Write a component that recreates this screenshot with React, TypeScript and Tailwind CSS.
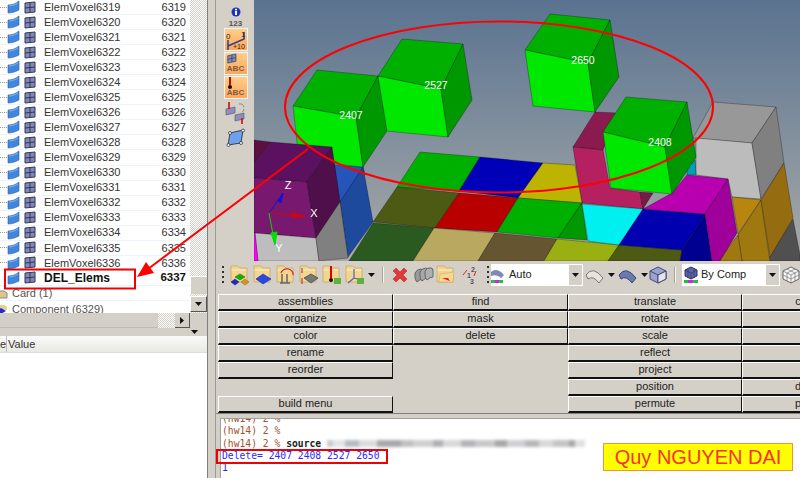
const treeIds = Array.from({ length: 18 }, (_, i) => 6319 + i);

const buttonRows = [
  ['assemblies', 'find', 'translate', 'c'],
  ['organize', 'mask', 'rotate', ''],
  ['color', 'delete', 'scale', ''],
  ['rename', null, 'reflect', ''],
  ['reorder', null, 'project', ''],
  [null, null, 'position', 'd'],
  ['build menu', null, 'permute', 'p'],
];

const blurBits = [
  [6, '#c8ccd0'], [12, '#e4e4e4'], [14, '#b8bcc0'], [18, '#dcdcdc'], [24, '#a8a8ac'], [12, '#c0c0c0'], [20, '#d0d0d0'],
  [10, '#b0b0b4'], [18, '#d8d8d8'], [14, '#b4b4b8'], [20, '#c8c8c8'], [12, '#a8a8a8'], [18, '#d0d0d4'], [14, '#b8b8b8'],
  [14, '#d8d8d8'], [16, '#c4c4c4'], [6, '#a8a8a8'], [10, '#e0e0e0'],
];

// top to bottom in paint order, coordinates are page pixels
const faces: [string, string][] = [
  // grey box, back right
  ['#989898', '693,138 713,102 776,107 752,143'],
  ['#bcbcbc', '696,138 752,143 761,199 732,197 728,179 696,175'],
  ['#808080', '752,143 776,107 784,163 761,199'],
  // orange boxes
  ['#505050', '767,261 793,219 800,255 800,261'],
  ['#b8860f', '732,197 761,200 738,234'],
  ['#a07810', '738,235 761,200 770,261 742,261'],
  ['#966c10', '761,200 784,163 793,218 770,257'],
  ['#a07810', '718,261 738,235 742,261'],
  // pink box
  ['#8a1a50', '573,147 595,112 617,113 603,150'],
  ['#b42060', '573,147 603,150 610,188 640,192 643,209 582,203'],
  ['#7a1848', '640,192 653,193 643,209'],
  ['#00a0b0', '687,168 695,160 696,175 687,175'],
  // floor
  ['#00b000', '420,152 480,157 459,191 397,187'],
  ['#0000b8', '480,157 543,163 518,198 459,191'],
  ['#bcb400', '543,163 575,165 582,203 518,198'],
  ['#4d5a13', '397,187 459,193 435,228 373,222'],
  ['#b80000', '459,193 518,198 497,232 435,228'],
  ['#00b000', '518,198 582,203 558,238 497,232'],
  ['#009800', '582,203 558,238 587,240'],
  ['#2a5a20', '373,223 434,228 413,261 349,261'],
  ['#b8a860', '434,228 495,233 478,261 413,261'],
  ['#655530', '495,233 557,239 544,261 478,261'],
  ['#9ab010', '557,239 619,245 608,261 544,261'],
  ['#4d5a13', '619,245 682,250 680,261 608,261'],
  ['#00f0f0', '582,204 643,209 619,245 588,241'],
  ['#0000b0', '643,209 705,214 682,250 619,245'],
  ['#000090', '705,214 712,261 680,261 682,250'],
  ['#b800b0', '643,209 672,193 687,175 728,179 705,214'],
  ['#a0009a', '705,214 728,179 737,233 720,261 712,261'],
  // blue column
  ['#2555b8', '334,165 363,167 365,174 340,202'],
  ['#1e4a9e', '363,167 373,222 348,257 340,202'],
  // green cubes
  ['#00b000', '293,106 317,70 378,76 356,117'],
  ['#00e800', '293,106 356,117 363,167 299,160'],
  ['#009800', '356,117 378,76 387,131 363,167'],
  ['#00b000', '378,76 402,39 463,44 441,89'],
  ['#00e800', '378,76 441,89 448,137 387,131'],
  ['#009800', '441,89 463,44 472,100 448,137'],
  ['#00b000', '525,50 550,14 610,20 588,63'],
  ['#00e800', '525,50 588,63 595,112 533,106'],
  ['#009800', '588,63 610,20 619,77 595,112'],
  ['#00b000', '603,132 626,97 687,102 665,147'],
  ['#00e800', '603,132 665,147 672,194 611,188'],
  ['#009800', '665,147 687,102 696,157 672,194'],
  // purple box
  ['#5c1040', '254,140 270,142 254,163'],
  ['#5c1060', '270,142 332,147 307,182 254,178 254,163'],
  ['#78186f', '254,178 307,182 316,238 254,233'],
  ['#4e0f4a', '307,182 332,147 340,202 316,238'],
  ['#bdbdbd', '255,233 316,238 319,261 258,261'],
  ['#808080', '316,238 340,202 348,258 319,261'],
  ['#ff00ff', '254,233 255,233 258,261 254,261'],
];

const Grip = () => (
  <div className="flex flex-col gap-[3px] w-[2px] shrink-0">
    {[0, 1, 2, 3].map((i) => (
      <div key={i} className="w-[2px] h-[2px] bg-[#303030]" />
    ))}
  </div>
);

const DownCaret = () => (
  <svg width="7" height="4" viewBox="0 0 7 4" className="shrink-0">
    <path d="M0 0h7L3.500 4z" fill="#111" />
  </svg>
);

const ShellFlag = () => (
  <svg width="13" height="14" viewBox="0 0 13 14" className="shrink-0">
    <path d="M1 5C5 5 8 4 12 1V10C8 12 5 13 1 13Z" fill="#3f86dc" stroke="#2a62b0" strokeWidth="0.6" />
    <path d="M2 6C5 6 8 5 11 3" stroke="#7fb4ee" fill="none" />
  </svg>
);

const ElemGrid = () => (
  <svg width="12" height="13" viewBox="0 0 12 13" className="shrink-0">
    <path d="M1 2L11 1V11L1 12Z" fill="#8088bc" stroke="#33364f" />
    <path d="M6 1.500V11.500M1 7L11 6" stroke="#33364f" />
  </svg>
);

const Folder = ({ children }: { children?: React.ReactNode }) => (
  <svg width="20" height="22" viewBox="0 0 20 22" className="shrink-0">
    <path d="M1 2h7l2 2h7v14H1z" fill="#f2d590" stroke="#c9a867" strokeWidth="0.8" />
    <path d="M1.500 6h15" stroke="#fbeec4" />
    {children}
  </svg>
);

const TreeRow = ({ label, id }: { label: string; id: number }) => (
  <div className="flex items-center h-[15.06px] border-b border-[#eef4fa] text-[11px] text-[#333] shrink-0">
    <div className="w-[7px] border-t border-dotted border-[#999] shrink-0" />
    <ShellFlag />
    <div className="w-[4px]" />
    <ElemGrid />
    <span className="ml-[8px]">{label}</span>
    <span className="ml-auto mr-[4px]">{id}</span>
  </div>
);

const OrangeBtn = ({ children }: { children: React.ReactNode }) => (
  <div className="w-[24px] h-[23px] border border-[#f4f4f4] bg-gradient-to-b from-[#ffcf8a] to-[#ffa558] flex flex-col items-center justify-end overflow-hidden">
    {children}
  </div>
);

const SideToolbar = () => (
  <div className="w-[38px] shrink-0 flex flex-col items-center pl-[1px] pt-[5px]">
    <svg width="14" height="14" viewBox="0 0 14 14">
      <circle cx="7" cy="7" r="4.500" fill="#1a34c0" />
      <rect x="6" y="3.800" width="2" height="1.500" fill="#fff" />
      <rect x="6" y="6" width="2" height="4" fill="#fff" />
    </svg>
    <span className="text-[8px] font-bold text-[#555] leading-[9px]">123</span>
    <div className="flex flex-col gap-[1px]">
      <OrangeBtn>
        <svg width="22" height="21" viewBox="0 0 22 21">
          <path d="M3 17L19 10V3" stroke="#2a3f8a" strokeWidth="1.500" fill="none" />
          <path d="M3 11V21" stroke="#2a3f8a" strokeWidth="1.500" />
          <text x="1" y="10" fontSize="8" fill="#222" fontFamily="Liberation Sans">0</text>
          <text x="16" y="8" fontSize="8" fill="#222" fontFamily="Liberation Sans">1</text>
          <text x="8" y="20" fontSize="7" fill="#222" fontFamily="Liberation Sans">+10</text>
        </svg>
      </OrangeBtn>
      <OrangeBtn>
        <svg width="22" height="12" viewBox="0 0 22 12" className="mb-[1px]">
          <path d="M2 3L11 1V9L2 11Z" fill="#8088bc" stroke="#33364f" strokeWidth="0.7" />
          <path d="M6.500 2V10M2 7L11 5" stroke="#33364f" strokeWidth="0.7" />
        </svg>
        <span className="text-[8px] font-bold text-[#7a5a44] leading-[8px] mb-[1px]">ABC</span>
      </OrangeBtn>
      <OrangeBtn>
        <svg width="22" height="13" viewBox="0 0 22 13" className="-mb-[1px]">
          <path d="M5 0V8" stroke="#e00000" strokeWidth="2" />
          <circle cx="5" cy="10" r="2" fill="#111" />
        </svg>
        <span className="text-[8px] font-bold text-[#7a5a44] leading-[8px] mb-[1px]">ABC</span>
      </OrangeBtn>
    </div>
    <svg width="24" height="22" viewBox="0 0 24 22" className="mt-[3px]">
      <path d="M2 7L11 5V11L2 13Z" fill="#8a90c0" stroke="#555" strokeWidth="0.6" />
      <path d="M11 13L20 11V17L11 19Z" fill="#8a90c0" stroke="#555" strokeWidth="0.6" />
      <path d="M5 0V7M18 16V22" stroke="#e00000" strokeWidth="1.600" />
      <path d="M15 2a4 4 0 0 1 5 3M18 10a3 3 0 0 0 2-3" stroke="#888" fill="none" />
    </svg>
    <svg width="20" height="20" viewBox="0 0 20 20" className="mt-[4px] ml-[1px]">
      <path d="M4 5L17 2L15 15L2 17Z" fill="#6ea0ee" stroke="#222" strokeWidth="0.8" />
      <g fill="#fff" stroke="#222" strokeWidth="0.7">
        <circle cx="4" cy="5" r="1.500" />
        <circle cx="17" cy="2.500" r="1.500" />
        <circle cx="15" cy="15" r="1.500" />
        <circle cx="2.500" cy="17" r="1.500" />
      </g>
    </svg>
  </div>
);

const Viewport = () => (
  <div className="w-[546px] h-[261px] shrink-0 bg-gradient-to-b from-[#5a7390] to-[#a8aaa8]">
    <svg width="546" height="261" viewBox="254 0 546 261" className="block">
      {faces.map(([fill, points], i) => (
        <polygon key={i} points={points} fill={fill} stroke="#00000066" strokeWidth="0.7" />
      ))}
      <g fill="#fff" fontSize="10.500" fontFamily="Liberation Sans" textAnchor="middle">
        <text x="351" y="119">2407</text>
        <text x="436" y="89">2527</text>
        <text x="583" y="64">2650</text>
        <text x="660" y="146">2408</text>
      </g>
      <path d="M269 213L283 193" stroke="#1010e0" />
      <path d="M278 201L283 193L281 203Z" fill="#1010e0" stroke="#1010e0" />
      <path d="M269 213L305 216" stroke="#e00000" />
      <path d="M292 213L305 216L292 217Z" fill="#e00000" stroke="#e00000" />
      <path d="M269 213L275 245" stroke="#00e000" />
      <path d="M271 233L275 245L277 232Z" fill="#00e000" stroke="#00e000" />
      <g fill="#fff" fontSize="11" fontFamily="Liberation Sans" textAnchor="middle">
        <text x="288" y="189">Z</text>
        <text x="314" y="217">X</text>
        <text x="279" y="252">Y</text>
      </g>
    </svg>
  </div>
);

const ComboBox = ({ icon, label, width }: { icon: React.ReactNode; label: string; width: string }) => (
  <div className={`${width} h-[22px] bg-white flex items-center shrink-0`}>
    {icon}
    <span className="text-[11px] text-[#222] ml-[2px]">{label}</span>
    <div className="ml-auto w-[13px] h-[20px] mr-[1px] bg-[#d4d0c8] flex items-center justify-center">
      <DownCaret />
    </div>
  </div>
);

const MainToolbar = () => (
  <div className="h-[33px] flex items-center shrink-0 pl-[6px] pb-[6px] overflow-hidden">
    <Grip />
    <div className="flex items-center gap-[3px] ml-[6px]">
      <Folder>
        <path d="M5 13l5-3 5 3-5 3z" fill="#10b010" stroke="#087008" strokeWidth="0.5" />
        <path d="M1 18l4-3 4 3-4 3z" fill="#1a2ad0" stroke="#101880" strokeWidth="0.5" />
        <path d="M11 18l4-3 4 3-4 3z" fill="#e09020" stroke="#906010" strokeWidth="0.5" />
      </Folder>
      <Folder>
        <path d="M3 15l7-5 8 5-8 5z" fill="#2848e0" stroke="#1428a0" strokeWidth="0.6" />
      </Folder>
      <Folder>
        <path d="M6 19V10M11 19V10M4 19h10" stroke="#666" strokeWidth="1.500" />
        <path d="M5 9a6 5 0 0 1 12 2" stroke="#e02020" fill="none" strokeWidth="1.200" />
      </Folder>
      <Folder>
        <path d="M5 14l7-4 7 4-7 5z" fill="#777" stroke="#333" strokeWidth="0.6" />
        <path d="M3 4V9M3 14V20" stroke="#b02020" />
      </Folder>
      <Folder>
        <path d="M9 2V14" stroke="#e00000" strokeWidth="2" />
        <circle cx="9" cy="16" r="2" fill="#111" />
        <rect x="12" y="14" width="7" height="6" fill="#60b040" />
      </Folder>
      <Folder>
        <path d="M9 5V14L3 19M9 14L17 16" stroke="#5060c0" strokeWidth="1.200" fill="none" />
        <rect x="12" y="14" width="7" height="6" fill="#60b040" />
      </Folder>
    </div>
    <div className="ml-[3px]">
      <DownCaret />
    </div>
    <div className="w-[2px] h-[16px] bg-[#f4f4f4] border-l border-[#a8a49c] ml-[7px]" />
    <svg width="18" height="18" viewBox="0 0 18 18" className="ml-[7px] shrink-0">
      <path d="M2 5L5 2L9 6L13 2L16 5L12 9L16 13L13 16L9 12L5 16L2 13L6 9Z" fill="#e03a3a" stroke="#a02020" strokeWidth="0.5" />
    </svg>
    <svg width="20" height="18" viewBox="0 0 20 18" className="ml-[5px] shrink-0">
      <path d="M1 7Q3 3 7 3Q9 3 9 7V13Q6 13 3 16Q1 14 1 11Z" fill="#9a9a9a" stroke="#666" />
      <path d="M6 6Q8 2 12 2Q14 2 14 6V12Q11 12 8 15Q6 13 6 10Z" fill="#a8a8a8" stroke="#666" />
      <path d="M11 5Q13 1 17 2Q19 2 19 5V11Q16 11 13 14Q11 12 11 9Z" fill="#b0b0b0" stroke="#666" />
    </svg>
    <div className="ml-[2px] flex">
      <Folder>
        <path d="M4 10l14-2-1 10H3z" fill="#f8d890" stroke="#c9a867" strokeWidth="0.6" />
        <path d="M6 14h6l2 3-3-1z" fill="#e82020" />
      </Folder>
    </div>
    <svg width="17" height="20" viewBox="0 0 17 20" className="ml-[6px] shrink-0">
      <text x="9" y="7" fontSize="7" fontWeight="bold" fill="#555" fontFamily="Liberation Sans">2</text>
      <text x="5" y="13" fontSize="7" fontWeight="bold" fill="#555" fontFamily="Liberation Sans">1</text>
      <text x="8" y="19" fontSize="7" fontWeight="bold" fill="#555" fontFamily="Liberation Sans">3</text>
      <path d="M1 10L5 5M14 6L12 11" stroke="#e02020" />
    </svg>
    <div className="ml-[8px]">
      <Grip />
    </div>
    <div className="ml-[2px]">
      <ComboBox
        width="w-[92px]"
        label="Auto"
        icon={
          <svg width="16" height="18" viewBox="0 0 16 18" className="shrink-0">
            <path d="M0 6Q6 1 13 9L10 12Q6 8 0 10Z" fill="#7f88b8" />
            <rect x="0" y="14" width="12" height="3" fill="#20c040" />
            <rect x="4" y="14" width="4" height="3" fill="#e020e0" />
          </svg>
        }
      />
    </div>
    <svg width="19" height="18" viewBox="0 0 19 18" className="ml-[2px] shrink-0">
      <path d="M1 9Q8 -1 18 12L14 17Q8 9 3 13Z" fill="#e8e4dc" stroke="#777" />
    </svg>
    <div className="ml-[4px]">
      <DownCaret />
    </div>
    <svg width="19" height="18" viewBox="0 0 19 18" className="ml-[3px] shrink-0">
      <path d="M1 9Q8 -1 18 12L14 17Q8 9 3 13Z" fill="#6c78b0" stroke="#3c4670" />
    </svg>
    <div className="ml-[4px]">
      <DownCaret />
    </div>
    <svg width="18" height="18" viewBox="0 0 18 18" className="ml-[1px] shrink-0">
      <path d="M9 1L17 5V13L9 17L1 13V5Z" fill="#9aa2d0" stroke="#444a70" />
      <path d="M1 5L9 9L17 5M9 9V17" stroke="#444a70" fill="none" />
      <path d="M9 9L17 5V13L9 17Z" fill="#e4e4ec" stroke="#444a70" />
    </svg>
    <div className="w-[2px] h-[16px] bg-[#f4f4f4] border-l border-[#a8a49c] ml-[7px] shrink-0" />
    <div className="ml-[6px]">
      <ComboBox
        width="w-[98px]"
        label="By Comp"
        icon={
          <svg width="16" height="18" viewBox="0 0 16 18" className="ml-[1px] shrink-0">
            <path d="M8 1L14 4V10L8 13L2 10V4Z" fill="#5c64a8" stroke="#2c3060" />
            <path d="M2 4L8 7L14 4M8 7V13M5 2.500V11.500M11 2.500V11.500" stroke="#2c3060" strokeWidth="0.6" fill="none" />
            <rect x="1" y="14" width="14" height="3" fill="#20c040" />
            <rect x="5" y="14" width="5" height="3" fill="#e020e0" />
          </svg>
        }
      />
    </div>
    <svg width="18" height="18" viewBox="0 0 18 18" className="ml-[2px] shrink-0">
      <path d="M9 1L17 5V13L9 17L1 13V5Z" fill="#f4f4f4" stroke="#666" />
      <path d="M1 5L9 9L17 5M9 9V17M5 3L13 7V15M13 3L5 7V15M1 9L9 13L17 9" stroke="#666" strokeWidth="0.6" fill="none" />
    </svg>
  </div>
);

const ButtonGrid = () => (
  <div className="grid grid-cols-[175px_175px_174px_112px] auto-rows-[17px] pl-[2px] shrink-0 text-[11px] text-[#222] w-[700px]">
    {buttonRows.flatMap((row, r) =>
      row.map((label, c) =>
        label === null ? (
          <div key={`${r}-${c}`} />
        ) : (
          <div
            key={`${r}-${c}`}
            className="flex items-center justify-center border-t border-l border-t-white border-l-white border-b-2 border-r border-b-[#111] border-r-[#111] leading-none pb-[1px]"
          >
            {label}
          </div>
        ),
      ),
    )}
  </div>
);

const ConsolePane = () => (
  <div className="flex-1 min-h-0 flex flex-col border-t border-[#808080]">
    <div className="mt-[4px] ml-[4px] flex-1 min-h-0 bg-white border-t border-l border-[#a0a0a0] overflow-hidden font-['DejaVu_Sans_Mono',monospace] text-[9.700px] leading-[12.300px] pl-[1px]">
      <div className="-mt-[6px] text-[#a5502a]">(hw14) 2 %</div>
      <div className="text-[#a5502a]">(hw14) 2 %</div>
      <div className="flex whitespace-pre">
        <span className="text-[#a5502a]">(hw14) 2 % </span>
        <span className="text-[#222] font-bold">source </span>
        <div className="flex items-center blur-[1.500px]">
          {blurBits.map(([w, color], i) => (
            <div key={i} className="h-[7px]" style={{ width: Number(w), backgroundColor: String(color) }} />
          ))}
        </div>
      </div>
      <div className="text-[#2a2aff]">Delete= 2407 2408 2527 2650</div>
      <div className="text-[#2a2aff]">1</div>
    </div>
  </div>
);

const LeftPanel = () => (
  <div className="w-[208px] shrink-0 flex flex-col border-r border-[#808080]">
    <div className="flex h-[313px] shrink-0">
      <div className="w-[190px] bg-white overflow-hidden flex flex-col shrink-0">
        {treeIds.map((id) => (
          <TreeRow key={id} label={`ElemVoxel${id}`} id={id} />
        ))}
        <div className="flex items-center h-[15.06px] border-b border-[#eef4fa] text-[#111] shrink-0">
          <div className="w-[7px] shrink-0" />
          <ShellFlag />
          <div className="w-[4px]" />
          <ElemGrid />
          <span className="ml-[8px] text-[12px] font-bold">DEL_Elems</span>
          <span className="ml-auto mr-[4px] text-[11.500px] font-bold">6337</span>
        </div>
        <div className="flex items-center h-[15.500px] border-b border-[#eef4fa] text-[11px] text-[#555] shrink-0">
          <svg width="12" height="12" viewBox="0 0 12 12" className="shrink-0">
            <path d="M-4 4h8l3 2v5H-4z" fill="#d8c890" stroke="#888" />
          </svg>
          <span>Card (1)</span>
        </div>
        <div className="flex items-center h-[15px] text-[11px] text-[#555] shrink-0">
          <svg width="12" height="12" viewBox="0 0 12 12" className="shrink-0">
            <path d="M-4 2h8l3 2v3H-4z" fill="#e8d08a" />
            <path d="M-4 8l5-3 5 3-5 3z" fill="#2030d0" />
          </svg>
          <span>Component (6329)</span>
        </div>
      </div>
      <div className="w-[17px] shrink-0 flex flex-col bg-[repeating-conic-gradient(#d4d0c8_0_25%,#ffffff_0_50%)] bg-[length:2px_2px]">
        <div className="h-[18px] mt-auto bg-[#d4d0c8] border-t border-l border-white" />
        <div className="h-[16px] mt-[2px] mb-[1px] bg-[#d4d0c8] border-t border-l border-white border-b border-r border-b-[#555] border-r-[#555] flex items-center justify-center">
          <DownCaret />
        </div>
      </div>
    </div>
    <div className="flex h-[15px] shrink-0">
      <div className="w-[158px] bg-[#d4d0c8] border-b border-[#bbb]" />
      <div className="w-[17px] bg-[repeating-conic-gradient(#d4d0c8_0_25%,#ffffff_0_50%)] bg-[length:2px_2px]" />
      <div className="w-[15px] bg-[#d4d0c8] border-r border-b border-[#555] flex items-center justify-center">
        <svg width="4" height="7" viewBox="0 0 4 7">
          <path d="M0 0L4 3.500L0 7Z" fill="#111" />
        </svg>
      </div>
    </div>
    <div className="flex justify-end pr-[9px] pt-[2px] h-[8px] shrink-0">
      <DownCaret />
    </div>
    <div className="h-[17px] shrink-0 flex items-center bg-gradient-to-b from-[#fafafa] to-[#e8e8e4] border-b border-[#ddd] text-[11px] text-[#333]">
      <span className="w-[7px] text-right overflow-hidden border-r border-[#bbb] shrink-0 flex justify-end">e</span>
      <span className="ml-[1px]">Value</span>
    </div>
    <div className="flex-1 bg-white" />
  </div>
);

export default function App() {
  return (
    <div className="relative flex w-[800px] h-[478px] overflow-hidden bg-[#d4d0c8] font-['Liberation_Sans',Arial,sans-serif]">
      <LeftPanel />
      <div className="w-[7px] shrink-0" />
      <div className="flex-1 min-w-0 flex flex-col border-l border-[#9a9a94]">
        <div className="flex shrink-0">
          <SideToolbar />
          <Viewport />
        </div>
        <MainToolbar />
        <ButtonGrid />
        <ConsolePane />
      </div>

      {/* annotations drawn on top of the screenshot */}
      <svg width="800" height="478" viewBox="0 0 800 478" className="absolute inset-0 pointer-events-none">
        <ellipse cx="499" cy="107" rx="214" ry="85.500" fill="none" stroke="#ff0000" strokeWidth="2" />
        <path d="M308 149L148 269" stroke="#ff0000" strokeWidth="2" />
        <path d="M137 277L146 262L154 273Z" fill="#ff0000" />
        <rect x="5" y="269.500" width="130" height="19" fill="none" stroke="#f00000" strokeWidth="2" />
        <rect x="217" y="450" width="170" height="13" fill="none" stroke="#f00000" strokeWidth="2" />
      </svg>
      <div className="absolute left-[603px] top-[443px] w-[190px] h-[28px] bg-[#ffff00] border border-[#f09040] flex items-center justify-center text-[20px] text-[#f83030] leading-none">
        Quy NGUYEN DAI
      </div>
    </div>
  );
}
